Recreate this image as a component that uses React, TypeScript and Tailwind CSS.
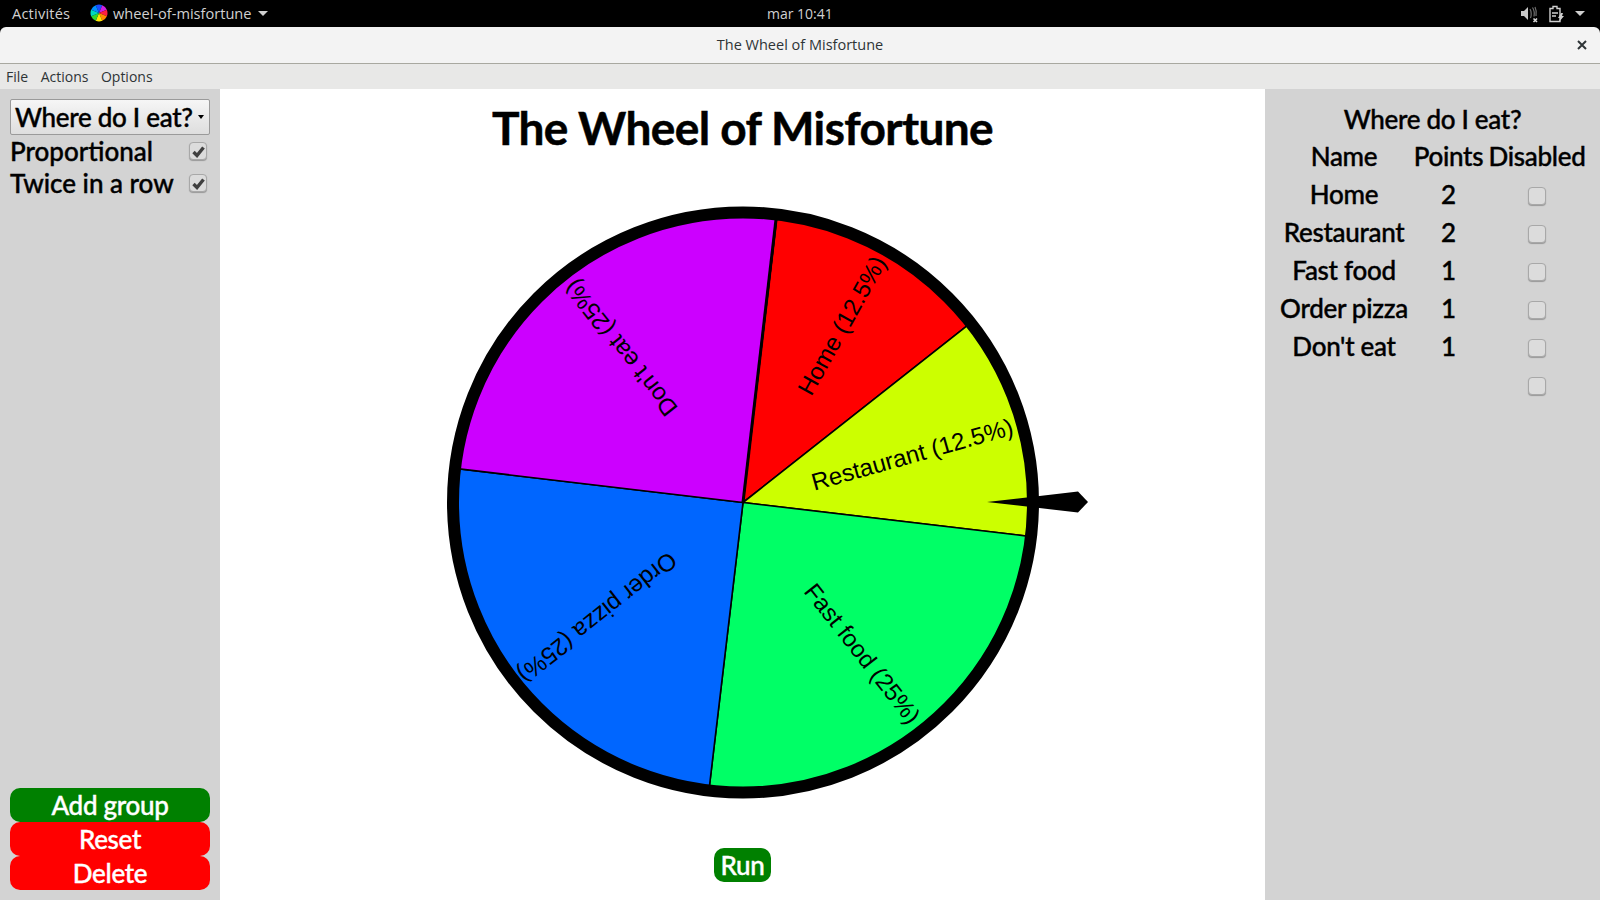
import React from "react";

interface Slice {
	label: string;
	color: string;
	from: number;
	to: number;
	end: number;
}

const slices: Slice[] = [
	{ label: "Home (12.5%)", color: "#ff0000", from: 83.25, to: 38.25, end: 280 },
	{ label: "Restaurant (12.5%)", color: "#ccff00", from: 38.25, to: -6.75, end: 280 },
	{ label: "Fast food (25%)", color: "#00ff66", from: -6.75, to: -96.75, end: 278 },
	{ label: "Order pizza (25%)", color: "#0066ff", from: -96.75, to: -186.75, end: 283 },
	{ label: "Don't eat (25%)", color: "#cc00ff", from: -186.75, to: -276.75, end: 280 },
];

const rows = [
	{ name: "Home", points: "2" },
	{ name: "Restaurant", points: "2" },
	{ name: "Fast food", points: "1" },
	{ name: "Order pizza", points: "1" },
	{ name: "Don't eat", points: "1" },
	{ name: "", points: "" },
];

const logoColors = ["#1a4cff", "#d020e0", "#ff2040", "#ff8a00", "#ffe600", "#30d830", "#00d8c0", "#0090ff"];

const point = (angle: number, r: number) => {
	const a = (angle * Math.PI) / 180;
	return `${(r * Math.cos(a)).toFixed(2)} ${(-r * Math.sin(a)).toFixed(2)}`;
};

const Checkbox = ({ checked = false }: { checked?: boolean }) => (
	<span className="flex h-[18px] w-[18px] items-center justify-center rounded-[4px] border border-[#a8a8a8] bg-[#dcdcdc] shadow-[0_1px_1px_#989898]">
		{checked && (
			<svg width="13" height="13" viewBox="0 0 13 13">
				<path d="M1.500 7 L5 10.500 L11.500 2.500" fill="none" stroke="#404040" strokeWidth="3.400" />
			</svg>
		)}
	</span>
);

const Wheel = () => (
	<svg width="700" height="600" viewBox="-350 -299.5 700 600" className="block">
		{slices.map((s) => (
			<path
				key={s.label}
				d={`M0 0 L${point(s.from, 288)} A288 288 0 0 1 ${point(s.to, 288)} Z`}
				fill={s.color}
				stroke="#000"
				strokeWidth="1.6"
			/>
		))}
		<line x1="0" y1="0" x2="33" y2="-283" stroke="#000" strokeWidth="3" />
		<circle r="290" fill="none" stroke="#000" strokeWidth="12" />
		{slices.map((s) => (
			<text
				key={s.label}
				transform={`rotate(${-(s.from + s.to) / 2})`}
				x={s.end}
				y="8"
				textAnchor="end"
				fontSize="24"
				fontFamily="'Liberation Sans', sans-serif"
				fill="#000"
			>
				{s.label}
			</text>
		))}
		<polygon points="244,-0.5 335,-11 345,-0.5 335,10" fill="#000" />
	</svg>
);

export default function App() {
	return (
		<div className="flex h-screen w-full flex-col overflow-hidden bg-black font-['Lato',sans-serif]">
			{/* GNOME top bar */}
			<div className="flex h-[27px] shrink-0 items-center justify-between bg-black pl-3 pr-[15px] font-['Open_Sans',sans-serif] text-[14.6px] text-[#d0d0d0]">
				<div className="flex items-center">
					<span className="w-[78px] tracking-[0.2px]">Activités</span>
					<svg width="18" height="18" viewBox="-9 -9 18 18">
						{logoColors.map((c, i) => (
							<path key={c} d={`M0 0 L${point(112.5 - i * 45, 8.500)} A8.500 8.500 0 0 1 ${point(67.5 - i * 45, 8.500)} Z`} fill={c} />
						))}
					</svg>
					<span className="ml-[5px]">wheel-of-misfortune</span>
					<span className="ml-[6px] h-0 w-0 border-x-[5px] border-t-[5px] border-x-transparent border-t-[#d0d0d0]" />
				</div>
				<span className="absolute left-[767px] text-[14px]">mar 10:41</span>
				<div className="flex items-center gap-[10px]">
					<svg width="18" height="18" viewBox="0 0 18 18" fill="none">
						<path d="M0 6h3l4-4v13l-4-4H0z" fill="#c8c8c8" />
						<path d="M9 4c1.500 2 1.500 7 .5 9M11.500 2.500c2 3 2 6 1.500 9M14 2c1.500 3 1.500 6 1 9" stroke="#707070" strokeWidth="1.200" />
						<path d="M12.500 13.500l3.500 3.500M16 13.500l-3.500 3.500" stroke="#d8d8d8" strokeWidth="1.600" />
					</svg>
					<svg width="16" height="18" viewBox="0 0 16 18" fill="none">
						<path d="M4 1.500h4v2h3v13H1v-13h3z" stroke="#d0d0d0" strokeWidth="1.400" />
						<path d="M3 8h6M3 11h4" stroke="#d0d0d0" strokeWidth="1.400" />
						<path d="M12 8l-3 5h2l-1 4 5-6h-2l1-3z" fill="#d0d0d0" />
					</svg>
					<span className="h-0 w-0 border-x-[5px] border-t-[5px] border-x-transparent border-t-[#d0d0d0]" />
				</div>
			</div>

			{/* Window title */}
			<div className="relative flex h-[37px] shrink-0 items-center justify-center rounded-t-[6px] border-b border-[#a8a8a0] bg-[#f3f3f3] pb-[1px] font-['Open_Sans',sans-serif] text-[14.5px] text-[#2e3436]">
				The Wheel of Misfortune
				<svg width="10" height="10" viewBox="0 0 10 10" className="absolute right-[13px]">
					<path d="M1 1l8 8M9 1l-8 8" stroke="#2e3436" strokeWidth="2" />
				</svg>
			</div>

			{/* Menu */}
			<div className="flex h-[25px] shrink-0 items-center gap-[12.5px] bg-[#e8e8e7] pl-[6px] font-['Open_Sans',sans-serif] text-[14px] text-[#2e3436]">
				<span>File</span>
				<span>Actions</span>
				<span>Options</span>
			</div>

			<div className="flex min-h-0 flex-1 text-black">
				{/* Left panel */}
				<div className="flex w-[220px] shrink-0 flex-col bg-[#d3d3d3] px-[10px] pb-[10px] pt-[10px] text-[26px] font-medium tracking-[-0.3px] [-webkit-text-stroke:0.4px_black]">
					<div className="flex h-[36px] items-center justify-between rounded-[2px] border border-[#9a9a9a] bg-gradient-to-b from-[#f6f6f6] to-[#dedede] pl-[4px] pr-[5px] leading-none">
						<span className="whitespace-nowrap">Where do I eat?</span>
						<span className="h-0 w-0 border-x-[3px] border-t-[4px] border-x-transparent border-t-black" />
					</div>
					<div className="flex h-[32px] items-center justify-between pr-[3px] leading-none tracking-normal">
						<span>Proportional</span>
						<Checkbox checked />
					</div>
					<div className="flex h-[32px] items-center justify-between pr-[3px] leading-none tracking-normal">
						<span>Twice in a row</span>
						<Checkbox checked />
					</div>
					<div className="mt-auto flex flex-col text-white [-webkit-text-stroke:0.4px_white]">
						<button className="h-[34px] rounded-[10px] bg-[#008000] leading-none">Add group</button>
						<button className="h-[34px] rounded-[10px] bg-[#ff0000] leading-none">Reset</button>
						<button className="h-[34px] rounded-[10px] bg-[#ff0000] leading-none">Delete</button>
					</div>
				</div>

				{/* Wheel */}
				<div className="flex min-w-0 flex-1 flex-col items-center bg-white">
					<h1 className="mb-[36px] flex h-[78px] items-center text-[46px] font-bold leading-none tracking-[-0.6px] [-webkit-text-stroke:0.5px_black]">
						The Wheel of Misfortune
					</h1>
					<Wheel />
					<button className="mt-[45px] h-[34px] rounded-[10px] bg-[#008000] px-[6px] text-[26px] font-medium leading-none tracking-[-0.3px] text-white [-webkit-text-stroke:0.4px_white]">
						Run
					</button>
				</div>

				{/* Right panel */}
				<div className="w-[335px] shrink-0 bg-[#d3d3d3] pl-[10px] pt-[11px] text-[26px] font-medium leading-none tracking-[-0.3px] [-webkit-text-stroke:0.4px_black]">
					<div className="flex h-[37px] w-[315px] items-center justify-center">Where do I eat?</div>
					<div className="grid grid-cols-[138px_71px_106px] items-center text-center">
						<div className="flex h-[38px] items-center justify-center">Name</div>
						<div className="flex h-[38px] items-center justify-center">Points</div>
						<div className="flex h-[38px] items-center justify-center">Disabled</div>
						{rows.map((row, i) => (
							<React.Fragment key={i}>
								<div className="flex h-[38px] items-center justify-center whitespace-nowrap">{row.name}</div>
								<div className="flex h-[38px] items-center justify-center">{row.points}</div>
								<div className="flex h-[38px] items-center justify-center pt-[4px]">
									<Checkbox />
								</div>
							</React.Fragment>
						))}
					</div>
				</div>
			</div>
		</div>
	);
}
